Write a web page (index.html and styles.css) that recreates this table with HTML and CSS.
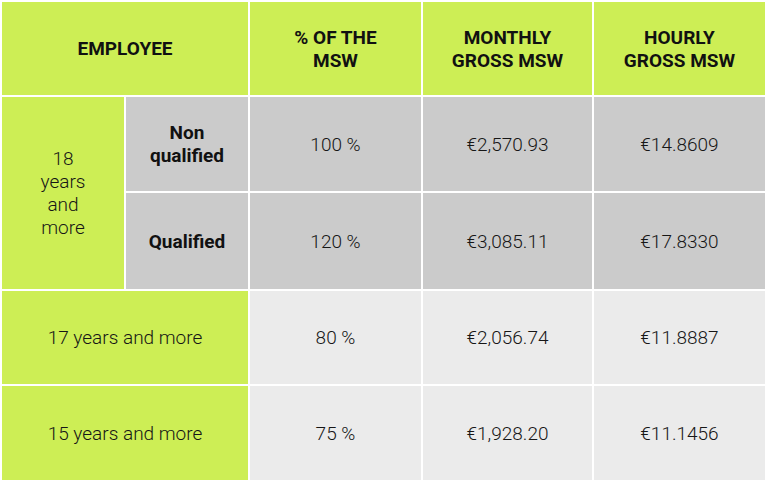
FILE: index.html
```html
<!DOCTYPE html>
<html>
<head>
<meta charset="utf-8">
<link rel="stylesheet" href="styles.css">
</head>
<body>
<div class="table">
  <div class="cell head span2">EMPLOYEE</div>
  <div class="cell head">% OF THE<br>MSW</div>
  <div class="cell head">MONTHLY<br>GROSS MSW</div>
  <div class="cell head">HOURLY<br>GROSS MSW</div>

  <div class="cell green rows2">18<br>years<br>and<br>more</div>
  <div class="cell grey bold">Non<br>qualified</div>
  <div class="cell grey">100 %</div>
  <div class="cell grey">€2,570.93</div>
  <div class="cell grey">€14.8609</div>

  <div class="cell grey bold">Qualified</div>
  <div class="cell grey">120 %</div>
  <div class="cell grey">€3,085.11</div>
  <div class="cell grey">€17.8330</div>

  <div class="cell green span2">17 years and more</div>
  <div class="cell light">80 %</div>
  <div class="cell light">€2,056.74</div>
  <div class="cell light">€11.8887</div>

  <div class="cell green span2">15 years and more</div>
  <div class="cell light">75 %</div>
  <div class="cell light">€1,928.20</div>
  <div class="cell light">€11.1456</div>
</div>
</body>
</html>
```
FILE: styles.css
```css
html, body {
  margin: 0;
  padding: 0;
  background: #ffffff;
}
.table {
  width: 767px;
  height: 482px;
  box-sizing: border-box;
  padding: 2px;
  display: grid;
  grid-template-columns: 122px 122px 171px 169px 171px;
  grid-template-rows: 93px 94px 96px 93px 94px;
  gap: 2px;
  background: #ffffff;
  font-family: Roboto, "Liberation Sans", sans-serif;
  font-size: 19px;
  line-height: 23px;
  color: #161616;
}
.cell {
  display: flex;
  align-items: center;
  justify-content: center;
  text-align: center;
  font-weight: 300;
}
.head {
  background: #cdee55;
  font-weight: 700;
  color: #111111;
}
.span2 {
  grid-column: span 2;
}
.rows2 {
  grid-row: span 2;
}
.green {
  background: #cdee55;
}
.grey {
  background: #cbcbcb;
}
.light {
  background: #ebebeb;
}
.bold {
  font-weight: 700;
  color: #111111;
}
```
